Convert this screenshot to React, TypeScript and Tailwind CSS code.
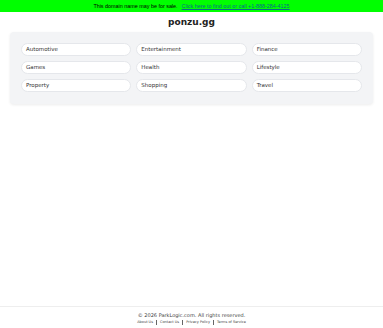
const categories = [
  'Automotive',
  'Entertainment',
  'Finance',
  'Games',
  'Health',
  'Lifestyle',
  'Property',
  'Shopping',
  'Travel',
];

const footerLinks = ['About Us', 'Contact Us', 'Privacy Policy', 'Terms of Service'];

export default function App() {
  return (
    <div className="flex min-h-[328px] flex-col bg-white font-['DejaVu_Sans',sans-serif] text-[#222]">
      <div className="flex h-[12px] items-center justify-center bg-[#00ff00] font-['Liberation_Sans',sans-serif] text-[5.4px] text-black">
        <span>This domain name may be for sale.</span>
        <a href="#" className="ml-[4px] text-[#0a6a8a] underline">
          Click here to find out or call +1-888-284-4125
        </a>
      </div>

      <main className="flex-1 px-[10px]">
        <h1 className="mt-[4px] text-center text-[9px] font-bold leading-[13px] text-[#222]">ponzu.gg</h1>

        <div className="mt-[3px] rounded-[4px] bg-[#f3f4f6] px-[11px] pt-[11px] pb-[12px] shadow-[0_1px_3px_rgba(0,0,0,0.08)]">
          <div className="grid grid-cols-3 gap-x-[5px] gap-y-[5px]">
            {categories.map((c) => (
              <a
                key={c}
                href="#"
                className="flex h-[13px] items-center rounded-full border border-[#e5e7eb] bg-white px-[4px] text-[5.5px] text-[#333]"
              >
                {c}
              </a>
            ))}
          </div>
        </div>
      </main>

      <footer className="mt-[199px] border-t border-[#eeeeee] pt-[5px] pb-[3px] text-center">
        <p className="text-[5px] leading-[7px] text-[#444]">© 2026 ParkLogic.com. All rights reserved.</p>
        <div className="flex items-center justify-center text-[3.5px] leading-[6px] text-[#444]">
          {footerLinks.map((l, i) => (
            <span key={l} className="flex items-center">
              {i > 0 && <span className="mx-[3px] h-[5px] w-px bg-[#666]" />}
              <a href="#">{l}</a>
            </span>
          ))}
        </div>
      </footer>
    </div>
  );
}
